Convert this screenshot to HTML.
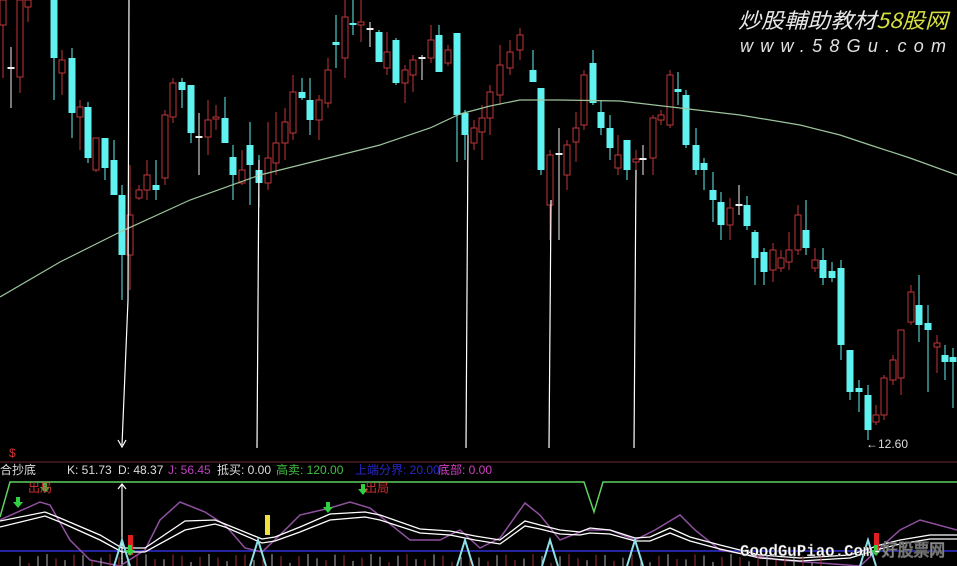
<!DOCTYPE html>
<html><head><meta charset="utf-8"><style>
html,body{margin:0;padding:0;background:#000;width:957px;height:566px;overflow:hidden}
svg{display:block}
.t{font-family:"Liberation Sans","Noto Sans CJK SC",sans-serif;font-size:12px}
</style></head><body>
<svg id="s" width="957" height="566" xmlns="http://www.w3.org/2000/svg">
<rect width="957" height="566" fill="#000"/>
<g id="c"></g>
<polyline fill="none" stroke="#9cc49c" stroke-width="1.2" points="0,297 60,262 120,232 190,200 260,175 320,160 380,145 430,128 460,114 490,106 520,100 560,100 620,101 680,108 740,115 800,125 840,135 870,145 910,158 957,175"/>
<g stroke="#fff" stroke-width="1.2" fill="none">
<path d="M129,0 L128,300 L122,445"/><path d="M118,440 L122,447 L126,440"/>
<path d="M259,160 L257,448"/><path d="M468,135 L466,448"/><path d="M551,200 L549,448"/><path d="M636,170 L634,448"/>
</g>
<text x="866" y="448" class="t" fill="#ddd" font-size="11">←12.60</text>
<line x1="0" y1="462" x2="957" y2="462" stroke="#4a1a22" stroke-width="1.5"/>
<text x="9" y="457" class="t" fill="#d03030" font-size="9">$</text>
<text x="0" y="474" class="t" fill="#ddd">合抄底</text>
<text x="67" y="474" class="t" fill="#ddd">K: 51.73</text>
<text x="118" y="474" class="t" fill="#ddd">D: 48.37</text>
<text x="168" y="474" class="t" fill="#c040c0">J: 56.45</text>
<text x="217" y="474" class="t" fill="#ddd">抵买: 0.00</text>
<text x="276" y="474" class="t" fill="#40c040">高卖: 120.00</text>
<text x="355" y="474" class="t" fill="#2828c8">上端分界: 20.00</text>
<text x="438" y="474" class="t" fill="#d040c0">底部: 0.00</text>
<polyline fill="none" stroke="#60d060" stroke-width="1.5" points="0,517 10,482 584,482 594,512 603,482 957,482"/>
<line x1="0" y1="551" x2="957" y2="551" stroke="#2424a0" stroke-width="2"/>
<path d="M122,566 L122,485 M118,489 L122,484 L126,489" stroke="#fff" stroke-width="1.2" fill="none"/>
<polyline fill="none" stroke="#9050a0" stroke-width="1.5" points="0,520 40,502 50,505 70,540 90,560 120,566 145,550 160,520 180,502 205,512 225,525 245,548 262,552 280,535 300,515 330,508 350,502 370,508 410,540 440,540 460,530 480,548 500,538 525,503 540,515 560,540 585,530 610,530 635,540 655,530 680,515 695,530 720,550 780,560 860,566 900,530 920,520 957,530"/>
<polyline fill="none" stroke="#fff" stroke-width="1.3" points="0,521 45,512 60,518 100,535 122,548 145,548 185,521 215,520 225,524 262,539 275,537 300,527 330,514 365,512 380,515 420,529 450,531 475,536 500,540 525,521 540,525 560,530 580,532 590,528 610,530 635,538 650,537 670,528 690,537 720,545 760,555 800,558 850,555 880,545 900,540 930,535 957,535"/>
<polyline fill="none" stroke="#fff" stroke-width="1.3" points="0,527 45,516 60,522 100,540 122,552 145,552 185,530 215,524 225,527 262,543 275,541 300,532 330,520 365,517 380,520 420,533 450,535 475,540 500,544 525,526 540,529 560,534 580,535 590,533 610,534 635,541 650,541 670,533 690,541 720,549 760,558 800,561 850,558 880,549 900,544 930,539 957,539"/>
<g id="v"></g>
<g stroke="#8fe0e8" stroke-width="2" fill="none" id="tri"></g>
<rect x="128" y="535" width="5" height="20" fill="#e02020"/>
<rect x="874" y="533" width="5" height="20" fill="#e02020"/>
<rect x="265" y="515" width="5" height="20" fill="#f0e040"/>
<g fill="#30d040" id="ar"></g>
<text x="28" y="492" class="t" fill="#d03030" font-size="11">出局</text>
<text x="365" y="492" class="t" fill="#d03030" font-size="11">出局</text>
<text x="740" y="556" font-family="'Liberation Mono','WenQuanYi Zen Hei',monospace" font-size="17" font-weight="bold" fill="#fff" stroke="#666" stroke-width="0.4" textLength="205" lengthAdjust="spacingAndGlyphs">GoodGuPiao.Com-好股票网</text>
<text x="738" y="28" font-family="'Noto Sans CJK SC',sans-serif" font-size="21" font-style="italic" fill="#e8e8e8" textLength="210" lengthAdjust="spacingAndGlyphs">炒股輔助教材<tspan fill="#d8e040">58股网</tspan></text>
<text x="740" y="52" font-family="'Liberation Sans',sans-serif" font-size="18" font-style="italic" fill="#e0e0e0" textLength="206" lengthAdjust="spacing">www.58Gu.com</text>
</svg>
<script>
var C=[[3,0,25,0,78,'r'],[11,67,69,47,108,'w'],[20,0,77,0,93,'r'],[28,0,7,0,22,'r'],[54,0,58,0,100,'c'],[62,60,73,50,95,'r'],[72,58,113,48,138,'c'],[80,107,117,100,150,'r'],[88,107,158,102,163,'c'],[96,138,170,138,172,'r'],[105,138,168,138,180,'c'],[114,160,195,140,195,'c'],[122,195,255,185,300,'c'],[130,215,255,165,290,'r'],[139,190,198,185,200,'r'],[147,175,190,160,200,'r'],[156,185,190,160,200,'c'],[165,115,178,110,185,'r'],[173,83,117,78,123,'r'],[182,82,90,78,108,'c'],[191,85,133,85,143,'c'],[199,136,138,113,175,'w'],[208,120,137,100,155,'r'],[216,117,119,105,130,'r'],[225,118,143,97,143,'c'],[233,157,175,145,200,'c'],[242,170,183,150,185,'r'],[250,145,165,122,205,'c'],[259,170,183,155,207,'c'],[268,158,183,122,190,'r'],[276,143,163,112,175,'r'],[285,122,143,108,160,'r'],[293,92,133,75,140,'r'],[302,92,98,78,100,'c'],[310,100,120,78,135,'c'],[319,100,120,95,140,'r'],[328,70,103,58,108,'r'],[336,42,45,15,68,'c'],[345,17,58,0,78,'r'],[353,23,25,0,35,'c'],[361,22,25,0,42,'r'],[370,28,30,22,47,'w'],[379,32,62,30,62,'c'],[387,52,68,32,75,'r'],[396,40,83,38,85,'c'],[405,70,83,65,103,'r'],[413,60,75,55,92,'r'],[422,57,59,55,80,'w'],[431,40,58,25,63,'r'],[439,35,72,25,72,'c'],[448,50,63,45,66,'r'],[457,33,115,33,162,'c'],[465,113,135,110,160,'c'],[474,128,143,120,150,'r'],[482,118,132,105,160,'r'],[490,92,118,85,135,'r'],[500,65,95,45,105,'r'],[510,52,68,40,75,'r'],[520,35,50,28,60,'r'],[533,70,82,50,82,'c'],[541,88,170,88,175,'c'],[550,155,205,150,240,'r'],[559,153,155,128,240,'w'],[567,145,175,140,190,'r'],[576,128,142,112,162,'r'],[584,75,125,70,130,'r'],[593,63,103,50,105,'c'],[601,112,128,100,135,'c'],[610,128,148,115,160,'c'],[618,155,168,135,175,'r'],[627,140,170,140,180,'c'],[636,159,162,150,170,'r'],[643,158,160,145,175,'w'],[653,118,158,115,175,'r'],[661,115,120,110,125,'r'],[670,75,125,70,128,'r'],[678,89,92,72,105,'c'],[686,95,145,90,148,'c'],[696,145,170,128,175,'c'],[704,163,170,158,190,'c'],[713,190,200,172,222,'c'],[721,202,225,192,240,'c'],[730,208,225,198,240,'r'],[739,204,206,185,215,'w'],[747,205,226,196,230,'c'],[755,232,258,230,285,'c'],[764,252,272,248,285,'c'],[773,250,270,243,282,'r'],[781,258,268,250,272,'r'],[789,250,262,232,270,'r'],[798,215,250,205,255,'r'],[806,230,248,200,255,'c'],[815,260,268,248,272,'r'],[823,260,278,248,285,'c'],[832,271,278,262,282,'c'],[841,268,345,260,360,'c'],[850,350,392,350,400,'c'],[859,388,392,380,412,'c'],[868,395,430,385,440,'c'],[876,415,422,405,425,'r'],[884,378,415,375,420,'r'],[893,360,380,355,385,'r'],[901,330,378,330,395,'r'],[911,292,322,285,325,'r'],[919,305,325,275,342,'c'],[928,323,330,305,392,'c'],[937,343,347,335,373,'r'],[945,355,362,345,380,'c'],[953,357,362,348,408,'c']];
var h='';
C.forEach(function(a){var x=a[0],o=a[1],c=a[2],hi=a[3],lo=a[4],t=a[5];
var col=t=='c'?'#5ff2f0':t=='w'?'#f0f0f0':'#c03838';
h+='<line x1="'+x+'" y1="'+hi+'" x2="'+x+'" y2="'+lo+'" stroke="'+col+'" stroke-width="1"/>';
var hh=Math.max(c-o,2);
if(t=='r')h+='<rect x="'+(x-3)+'" y="'+o+'" width="6" height="'+hh+'" fill="#000" stroke="'+col+'" stroke-width="1"/>';
else h+='<rect x="'+(x-3.5)+'" y="'+o+'" width="7" height="'+hh+'" fill="'+col+'"/>';});
document.getElementById('c').innerHTML=h;
var T='';[122,258,465,550,635,868].forEach(function(x){T+='<path d="M'+(x-8)+',566 L'+x+',540 L'+(x+8)+',566"/>';});
document.getElementById('tri').innerHTML=T;
var A='';[[18,505],[45,490],[328,510],[363,492],[130,553],[876,553]].forEach(function(p){var x=p[0],y=p[1];A+='<path d="M'+(x-2)+','+(y-8)+' h4 v5 h3 l-5,6 l-5,-6 h3z"/>';});
document.getElementById('ar').innerHTML=A;
var V='';for(var x=20;x<957;x+=9){if(Math.sin(x*0.7)>0.2){var hgt=3+Math.abs(Math.sin(x*1.3))*9;V+='<line x1="'+x+'" y1="566" x2="'+x+'" y2="'+(566-hgt)+'" stroke="'+(Math.sin(x)>0?'#b0b0b0':'#a03030')+'" stroke-width="1"/>';}}
document.getElementById('v').innerHTML=V;
</script>
</body></html>
